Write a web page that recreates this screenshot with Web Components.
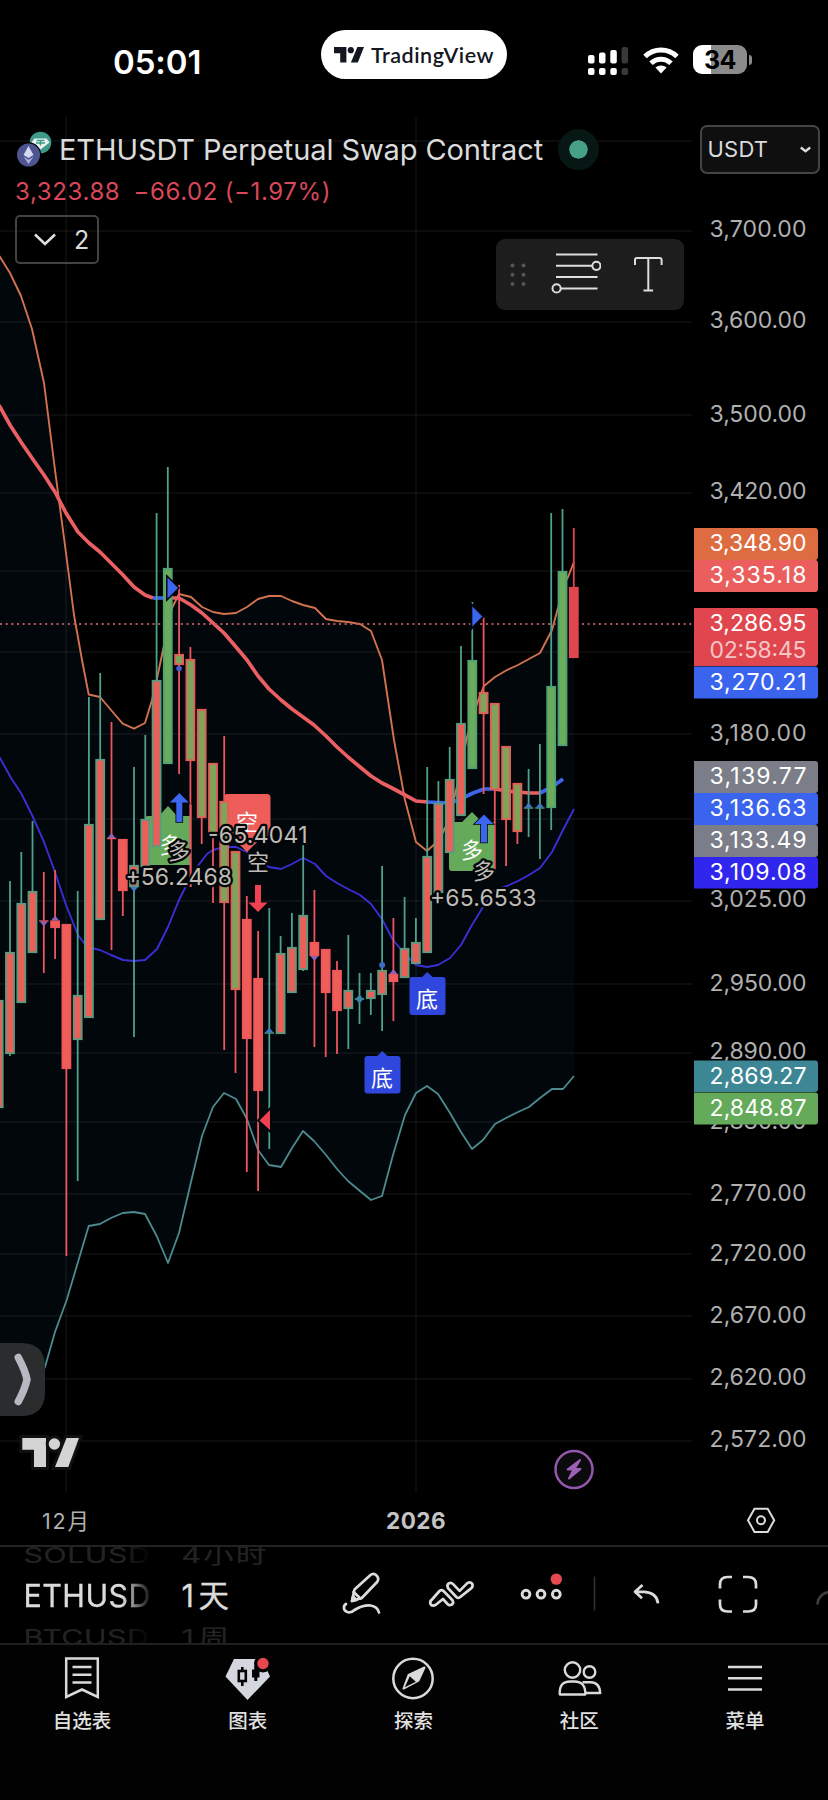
<!DOCTYPE html>
<html lang="zh">
<head>
<meta charset="utf-8">
<title>ETHUSDT</title>
<style>
  body {
    margin: 0;
    background: #000;
    color: #dbdbdb;
    font-family: Inter, "Noto Sans CJK SC", sans-serif;
  }
</style>
</head>
<body>
<trading-app></trading-app>

<script>
class StatusBar extends HTMLElement {
  constructor() {
    super();
    this._shadowRoot = this.attachShadow({ mode: 'open' });
  }

  connectedCallback() {
    this._shadowRoot.innerHTML = `
      <style>
        :host { display: grid; grid-template-columns: 321px 186px 1fr; height: 110px; }
        .time { padding: 42px 0 0 113px; font-size: 33px; line-height: 40px; font-weight: 600; color: #fff; letter-spacing: -0.1px; }
        .pill { display: flex; align-items: center; box-sizing: border-box; height: 49px; margin-top: 30px; padding-left: 13px; border-radius: 25px; background: #fff; color: #131722; }
        .pill span { margin-left: 7px; font: 600 21.5px/28px Lato, sans-serif; letter-spacing: 0.5px; white-space: nowrap; }
        .right { display: flex; padding: 45px 0 0 81px; }
        .battery { display: flex; align-items: center; justify-content: center; width: 54px; height: 29px; margin-left: 14px; border-radius: 9px; background: linear-gradient(90deg, #fff 18px, #8b8b8b 18px); color: #000; font-size: 25px; font-weight: 700; letter-spacing: -0.5px; }
        .nub { width: 3px; height: 10px; margin: 10px 0 0 2px; border-radius: 0 3px 3px 0; background: #8b8b8b; }
      </style>
      <div class="time">05:01</div>
      <div class="pill">
        <svg width="30" height="16" viewBox="0 0 30 16" fill="#131722">
          <path d="M0 0h12.4v15.6H6.2V6.2H0z"/><circle cx="16.8" cy="3.2" r="3.1"/><path d="M23.4 0H30l-6.2 15.6h-6.9z"/>
        </svg>
        <span>TradingView</span>
      </div>
      <div class="right">
        <svg width="41" height="31" viewBox="0 0 41 31">
          <g fill="#fff">
            <rect x="0" y="10" width="6.5" height="8.6" rx="2"/><rect x="11" y="7.5" width="6.5" height="11.1" rx="2"/><rect x="22.3" y="5" width="6.5" height="13.6" rx="2"/>
            <rect x="0" y="23" width="6.5" height="7" rx="2"/><rect x="11" y="23" width="6.5" height="7" rx="2"/><rect x="22.3" y="23" width="6.5" height="7" rx="2"/>
          </g>
          <g fill="#393939"><rect x="33.6" y="2" width="6.5" height="16.6" rx="2"/><rect x="33.6" y="23" width="6.5" height="7" rx="2"/></g>
        </svg>
        <svg width="36" height="30" viewBox="0 0 36 30" style="margin-left:14px" fill="none" stroke="#fff" stroke-width="5">
          <path d="M2 11.5c9-8.7 23-8.7 32 0M8 18.3c5.6-5.4 14.4-5.4 20 0"/>
          <path d="M18 28.6l-5.6-6c3.2-2.8 8-2.8 11.2 0z" fill="#fff" stroke="none"/>
        </svg>
        <div class="battery">34</div><div class="nub"></div>
      </div>
    `;
  }
}
customElements.define('status-bar', StatusBar);

// Bars are 11.275px apart. Each row: high, body top, body bottom, low, kind, marker.
// kind: u = rising, d = falling, g = rising strong, f = falling pullback, n = live bar
const BARS = [
  [1000, 1000, 1108, 1108, 'u'],
  [881, 952, 1054, 1056, 'u'],
  [852, 903, 1003, 1003, 'u'],
  [821, 891, 953, 953, 'u'],
  [872, 920.5, 921.5, 973, 'd', 'dn'],
  [870, 920.5, 928, 959, 'd', 'up'],
  [924, 924, 1069, 1256, 'd'],
  [891, 995, 1040, 1181, 'u'],
  [697, 824, 1018, 1018, 'u'],
  [673, 759, 920, 920, 'u'],
  [722, 838, 839, 950, 'd', 'up'],
  [839, 839, 891, 916, 'd'],
  [767, 865, 887, 1037, 'u', 'dn'],
  [735, 819, 867, 867, 'u'],
  [513, 680, 847, 847, 'u'],
  [467, 568, 764, 764, 'g'],
  [585, 654, 665, 774, 'f', 'di'],
  [647, 659, 761, 887, 'f'],
  [709, 709, 818, 844, 'f'],
  [763, 763, 836, 903, 'f'],
  [736, 801, 903, 1050, 'f'],
  [851, 851, 990, 1073, 'f'],
  [896, 919, 1039, 1172, 'd'],
  [931, 978, 1091, 1191, 'd'],
  [908, 1032.5, 1033.5, 1149, 'u', 'up'],
  [936, 953, 1034, 1034, 'u'],
  [913, 947, 993, 993, 'u'],
  [845, 915, 970, 971, 'u'],
  [890, 942, 956, 1047, 'd', 'dn'],
  [949, 949, 993, 1057, 'd'],
  [961, 970, 1011, 1054, 'd'],
  [935, 990, 1009, 1049, 'u'],
  [973, 998.5, 999.5, 1024, 'u', 'mid'],
  [973, 990, 999, 1015, 'u'],
  [866, 970, 995, 1031, 'u', 'top'],
  [918, 974, 982, 1021, 'd', 'up'],
  [897, 948, 978, 978, 'u'],
  [918, 942, 964, 964, 'u'],
  [767, 856, 953, 953, 'u'],
  [781, 803, 893, 893, 'u'],
  [747, 779, 853, 853, 'u'],
  [646, 723, 816, 816, 'u'],
  [602, 660, 769, 769, 'g'],
  [616, 692, 714, 794, 'f'],
  [703, 703, 790, 870, 'f'],
  [746, 746, 820, 866, 'f'],
  [783, 783, 832, 844, 'f'],
  [769, 807.5, 808.5, 837, 'u', 'up'],
  [744, 807.5, 808.5, 859, 'u', 'up'],
  [513, 686, 808, 830, 'g'],
  [509, 571, 746, 746, 'g'],
  [528, 587, 658, 658, 'n']
];

const KINDS = {
  u: ['#5a9b7f', '#eb5f59', '#4fa08c'],
  d: ['#ef5659', '#ef5d58', '#ef5560'],
  g: ['#4fa274', '#6aab5c', '#4fa08c'],
  f: ['#e45c55', '#80a35c', '#ef5560'],
  n: ['#e0464d', '#e0464d', '#e0464d']
};

const UPPER = '-3,252 0,257 10,273 21,296 32,329 44,383 55,470 66,553 74,615 82,660 88.7,694.5 100,697 111,710 122.7,723.7 134,728.7 145,723 152,700 156.7,680 163,650 172,608 179,594 191,597 202,607 213,612 224,614 236,613 247,607 258,599 269,596 281,596 292,601 303,605 315,608 326,619 337,621 348,622 360,624 371,631 382,660 394,740 405,800 416,842 427,851 439,840 449,820 458,782 467,737 473,716 479,698 484,686 495,677 507,670 518,665 529,659 540,653 552,630 558,608 563,586 568,577 574,562';
const LOWER = '-3,1408 22,1402 33,1390 45,1367 55,1332 66.7,1300 77.7,1263 88.7,1226 100,1224 111,1218 122.7,1213 134,1212 145,1214 156.7,1236 168,1263 179,1233 191,1182 202,1136 213,1107 224,1093 236,1099 247,1119 258,1150 269,1165 281,1167 292,1148 303,1131 314,1141 326,1155 337,1169 348,1181 360,1191 371,1200 382,1196 393,1155 405,1115 416,1093 427,1086 438,1094 450,1113 461,1132 472,1149 483,1140 495,1124 506,1118 518,1112 529,1107 540,1098 552,1089 563,1089 574,1076';
const MIDDLE = '-2,755 0,758 11,778 21,793 32,815 44,842 55,872 66,905 78,935 87,947 100,950 111,955 123,960 134,961 145,960 157,949 168,927 179,900 188,882 197,867 207,854 213,850 224,847 236,847 247,852 258,861 269,867 281,869 292,864 303,858 315,864 326,876 337,883 348,889 360,895 371,904 382,919 393,940 405,954 416,965 427,967 438,965 450,958 461,945 472,925 483,907 495,890 507,886 518,881 529,875 540,868 552,852 563,830 574,809';
const TREND = [
  ['#ea5f62', '-2,404 0,407 10,425 21,442 32,458 44,475 55,492 66,513 78,532 89,543 100,552 111,563 123,575 134,587 145,595 153,598'],
  ['#3f66ea', '153,598 168,598'],
  ['#ea5f62', '168,598 179,598 191,605 202,613 213,623 224,633 236,647 247,660 258,676 269,689 281,700 292,709 303,717 314,725 326,736 337,747 348,757 360,767 371,776 382,783 392,788 405,795 416,801 427,802'],
  ['#3f66ea', '427,802 450,803 461,799 473,793 484,789 495,789'],
  ['#ea5f62', '495,789 507,791 518,792 529,793 540,793'],
  ['#3f66ea', '540,793 552,787 563,779']
];

const PRICES = [
  ['3,700.00', 229], ['3,600.00', 320], ['3,500.00', 413.5], ['3,420.00', 491],
  ['3,180.00', 733], ['3,025.00', 899], ['2,950.00', 983], ['2,890.00', 1051],
  ['2,830.00', 1121], ['2,770.00', 1192.5], ['2,720.00', 1253], ['2,670.00', 1315],
  ['2,620.00', 1377], ['2,572.00', 1439]
];

const TAGS = [
  ['3,348.90', 528, 32, '#dd6c41'], ['3,335.18', 560, 32, '#ea5f5d'],
  ['3,286.95', 608, 58, '#e0464d'], ['3,270.21', 666.5, 32, '#3a64ee'],
  ['3,139.77', 761, 32, '#7b7d88'], ['3,136.63', 793, 32, '#3a64ee'],
  ['3,133.49', 825, 32, '#7b7d88'], ['3,109.08', 857, 31.5, '#3026ee'],
  ['2,869.27', 1060.5, 31.5, '#3d8795'], ['2,848.87', 1092.5, 32, '#65a95a']
];

class PriceChart extends HTMLElement {
  constructor() {
    super();
    this._shadowRoot = this.attachShadow({ mode: 'open' });
  }

  connectedCallback() {
    this.render();
  }

  grid() {
    const rows = [141, 231, 322, 415, 493, 571, 652, 734, 819, 901, 984, 1053, 1122, 1194, 1254, 1316, 1379, 1441];
    return rows.map(y => `<path d="M0 ${y}H692"/>`).join('') + '<path d="M66 117V1492M416 117V1492"/>';
  }

  marker(type, x, top, bottom, kind) {
    const color = kind === 'd' ? '#9060b5' : '#3f78c0';
    const up = y => `<path d="M${x} ${y - 4}l4 5h-8z" fill="${color}"/>`;
    switch (type) {
      case 'up': return up(top - 1);
      case 'dn': return `<path d="M${x} ${bottom + 5}l4-5h-8z" fill="${color}"/>`;
      case 'di': return `<circle cx="${x}" cy="668.5" r="2.8" fill="#4a5cd0"/>`;
      case 'mid': return `<path d="M${x} ${top - 4}l4 4.5l-4 4.5l-4-4.5z" fill="#3d84a4"/>`;
      case 'top': return `<circle cx="${x}" cy="965" r="3" fill="#3b6cc0"/>`;
    }
    return '';
  }

  bars() {
    return BARS.map(([high, top, bottom, low, kind, mark], n) => {
      const x = +(10 + 11.275 * (n - 1)).toFixed(1);
      const [edge, fill, wick] = KINDS[kind];
      let out = '';
      if (high < top) out += `<path d="M${x} ${high}V${top}" stroke="${wick}" stroke-width="1.8"/>`;
      if (low > bottom) out += `<path d="M${x} ${bottom}V${low}" stroke="${wick}" stroke-width="1.8"/>`;
      if (bottom - top > 2) {
        out += `<rect x="${x - 4}" y="${top + 0.8}" width="8" height="${bottom - top - 1.6}" fill="${fill}" stroke="${edge}" stroke-width="1.8"/>`;
      } else {
        out += `<path d="M${x - 4.7} ${top + 0.5}h9.4" stroke="${wick}" stroke-width="1.4"/>`;
      }
      return out + this.marker(mark, x, top, bottom, kind);
    }).join('');
  }

  render() {
    const arrowUp = (x, y, h) => `<path d="M${x} ${y}l9.5 9.5h-6.5V${y + h}h-6V${y + 9.5}h-6.5z" fill="#3c66ef" stroke="#02060b" stroke-width="1.6" paint-order="stroke"/>`;
    this._shadowRoot.innerHTML = `
      <style>
        :host { display: block; height: 1435px; }
        svg { display: block; }
        .axis { font-size: 23px; fill: #b0b0b0; }
        .tag { font-size: 23px; fill: #fff; }
        .cn { font-size: 22px; text-anchor: middle; fill: #fff; }
        .note { fill: #bfbcb8; stroke: #030507; stroke-width: 4.5px; stroke-linejoin: round; paint-order: stroke; }
        .num { font-size: 23px; }
      </style>
      <svg width="828" height="1435" viewBox="0 110 828 1435">
        <path d="M${UPPER} ${LOWER.split(' ').reverse().join(' ')}z" fill="#02070c"/>
        <g stroke="#aaa" stroke-opacity="0.07" stroke-width="2">${this.grid()}</g>
        <g fill="none" stroke-linejoin="round">
          <polyline points="${UPPER}" stroke="#d2724f" stroke-width="1.9"/>
          <polyline points="${LOWER}" stroke="#4c8b8f" stroke-width="1.8"/>
          <polyline points="${MIDDLE}" stroke="#3a2fd6" stroke-width="1.9"/>
          ${TREND.map(([color, points]) => `<polyline points="${points}" stroke="${color}" stroke-width="3.7"/>`).join('')}
        </g>
        <path d="M0 624H692" stroke="#b5575f" stroke-width="2" stroke-dasharray="2 3.65"/>

        <path d="M148 816h11l9-10 9 10h13.5V865H148q-3 0-3-3V819q0-3 3-3z" fill="#65aa5b"/>
        <path d="M452 822h10l10-10 10 10h13V871H452q-3 0-3-3V825q0-3 3-3z" fill="#65aa5b"/>
        <path d="M227 794h40q3.5 0 3.5 3.5V840H259l-12 12-12-12H224V797q0-3 3-3z" fill="#ee5d59"/>
        ${this.bars()}
        <path d="M190.7 805V887" stroke="#ef5560" stroke-width="1.8"/>
        <text class="cn" x="170.5" y="853">多</text>
        <text class="cn" x="472" y="858">多</text>
        <text class="cn" x="247" y="830">空</text>

        <g fill="#2f47dc">
          <rect x="409.5" y="977" width="36" height="38" rx="3"/><path d="M421 978l6.300-6 6.300 6z"/>
          <rect x="364.5" y="1056" width="36" height="37.5" rx="3"/><path d="M376 1057l6.300-6 6.300 6z"/>
        </g>
        <text class="cn" x="427" y="1007">底</text>
        <text class="cn" x="382" y="1086">底</text>

        <text class="cn note" x="179" y="858.5">多</text>
        <text class="cn note" x="484" y="878.5">多</text>
        <text class="cn note" x="258" y="869.5">空</text>
        <text class="note num" x="125.5" y="885" textLength="106.5">+56.2468</text>
        <text class="note num" x="208" y="843" textLength="99.5">-65.4041</text>
        <text class="note num" x="430" y="905.5" textLength="106.5">+65.6533</text>

        ${arrowUp(179.3, 793, 29)}
        ${arrowUp(484, 814.5, 28)}
        <path d="M258 912l9.5-9.5h-6.5V885h-6v17.5h-6.5z" fill="#f04152"/>
        <path d="M167.5 577.5v21l10.5-10.5z" fill="#3c66ef" stroke="#02060b" stroke-width="3" paint-order="stroke"/>
        <path d="M472.3 606.5v20l10-10z" fill="#3c66ef" stroke="#02060b" stroke-width="4" paint-order="stroke"/>
        <path d="M270 1110v20l-10.5-9.5z" fill="#f04152" stroke="#02060b" stroke-width="4" paint-order="stroke"/>

        ${PRICES.map(([text, y]) => `<text class="axis" x="709.5" y="${y + 8.3}" textLength="97">${text}</text>`).join('')}
        ${TAGS.map(([text, y, h, color]) => `
          <path d="M694 ${y}h121q3 0 3 3v${h - 6}q0 3-3 3H694z" fill="${color}"/>
          <text class="tag" x="709.5" y="${y + 23.3}" textLength="97">${text}</text>`).join('')}
        <text class="tag" x="709.5" y="657.5" textLength="97" fill-opacity="0.7">02:58:45</text>

        <circle cx="574" cy="1469.5" r="18.5" fill="#0b0a0c" stroke="#9457ae" stroke-width="2.5"/>
        <path d="M580 1460l-12.5 9.500h6l-4.500 9 11.500-9.500h-6z" fill="#9d60b5" stroke="#9d60b5" stroke-width="2" stroke-linejoin="round"/>

        <g fill="#d4d4d4" stroke="#101010" stroke-width="6" paint-order="stroke">
          <path d="M22.3 1438H46v29H34v-17.3H22.3z"/><circle cx="54.4" cy="1444" r="5.7"/><path d="M66.5 1438H79l-10.7 29H55z"/>
        </g>
        <path d="M0 1343H21Q45 1343 45 1367V1392Q45 1416 21 1416H0z" fill="#2b2c2e"/>
        <path d="M18.3 1357.5Q25 1370 27 1379.5Q25 1389 18.3 1401.5" fill="none" stroke="#b7b9c1" stroke-width="7.5" stroke-linecap="round"/>

        <text class="axis" x="42" y="1529" style="font-size:21.5px" textLength="47">12月</text>
        <text class="axis" x="386" y="1529" style="font-size:22.5px;font-weight:700;fill:#c4c4c4" textLength="59.5">2026</text>
        <g fill="none" stroke="#dcdcdc" stroke-width="2">
          <path d="M754.5 1508.7h13.2l6.5 11.6-6.5 11.6h-13.2l-6.5-11.6z"/><circle cx="761" cy="1520.3" r="4"/>
        </g>
      </svg>
    `;
  }
}
customElements.define('price-chart', PriceChart);

class SymbolLegend extends HTMLElement {
  constructor() {
    super();
    this._shadowRoot = this.attachShadow({ mode: 'open' });
  }

  connectedCallback() {
    this._shadowRoot.innerHTML = `
      <style>
        :host { display: block; }
        .title { display: flex; align-items: center; height: 44px; font-size: 29px; white-space: nowrap; }
        .title svg { margin: 0 7px 0 2px; }
        .name { width: 485px; letter-spacing: -0.1px; }
        .live { width: 19px; height: 19px; border: 11px solid #071713; border-radius: 50%; margin-left: 14px; background: #46a186; background-clip: padding-box; }
        .change { height: 32px; margin-top: 5px; font-size: 24px; line-height: 32px; letter-spacing: 0.62px; word-spacing: -0.8px; color: #d9475a; white-space: pre; }
        .count { display: flex; align-items: center; box-sizing: border-box; width: 84px; height: 49px; margin-top: 7px; padding-left: 17px; border: 2px solid #434343; border-radius: 5px; font-size: 25px; }
        .count span { margin-left: 18px; }
      </style>
      <div class="title">
        <svg width="35" height="36" viewBox="0 0 35 36">
          <circle cx="23.5" cy="11.5" r="10.8" fill="#3f9a8a"/>
          <path d="M17.5 7.5h12l3 4-9 7-9-7z" fill="#e8f3f1"/><path d="M19.5 9.5h8M23.5 9.5v5M19 12h9" stroke="#3f9a8a" stroke-width="1.5"/>
          <circle cx="11.5" cy="24" r="11.5" fill="#4d5490" stroke="#000" stroke-width="2.5" paint-order="stroke"/>
          <path d="M11.5 15l5 9-5 3-5-3z" fill="#d5d9f2"/><path d="M6.5 25.7l5 3 5-3-5 7.3z" fill="#a9b0dc"/>
        </svg>
        <span class="name">ETHUSDT Perpetual Swap Contract</span>
        <i class="live"></i>
      </div>
      <div class="change">3,323.88  −66.02 (−1.97%)</div>
      <div class="count">
        <svg width="22" height="13" viewBox="0 0 22 13" fill="none" stroke="#e0e0e0" stroke-width="2.6"><path d="M1 1.500l10 9.500 10-9.500"/></svg>
        <span>2</span>
      </div>
    `;
  }
}
customElements.define('symbol-legend', SymbolLegend);

class CurrencySelect extends HTMLElement {
  constructor() {
    super();
    this._shadowRoot = this.attachShadow({ mode: 'open' });
  }

  connectedCallback() {
    this._shadowRoot.innerHTML = `
      <style>
        :host { display: flex; align-items: center; justify-content: space-between; box-sizing: border-box; width: 120px; height: 49px; padding: 0 7px 1px 5.5px; border: 2px solid #444; border-radius: 7px; background: #0f0f0f; font-size: 22px; letter-spacing: 0.2px; }
        svg { margin-top: 2px; }
      </style>
      <slot></slot>
      <svg width="11" height="7" viewBox="0 0 11 7" fill="none" stroke="#dbdbdb" stroke-width="2.4"><path d="M.8 1.500l4.700 3.700 4.700-3.700"/></svg>
    `;
  }
}
customElements.define('currency-select', CurrencySelect);

class DrawingTools extends HTMLElement {
  constructor() {
    super();
    this._shadowRoot = this.attachShadow({ mode: 'open' });
  }

  connectedCallback() {
    this._shadowRoot.innerHTML = `
      <style>
        :host { display: flex; align-items: center; box-sizing: border-box; width: 188px; height: 71px; padding-left: 14px; border-radius: 9px; background: #1d1d1d; }
      </style>
      <svg width="16" height="26" viewBox="0 0 16 26" fill="#555">
        <circle cx="2.5" cy="3.5" r="2"/><circle cx="13.5" cy="3.5" r="2"/><circle cx="2.5" cy="12.8" r="2"/><circle cx="13.5" cy="12.8" r="2"/><circle cx="2.5" cy="22" r="2"/><circle cx="13.5" cy="22" r="2"/>
      </svg>
      <svg width="50" height="42" viewBox="0 0 50 42" style="margin:-3px 0 0 25px" fill="none" stroke="#dedede" stroke-width="2">
        <path d="M5 2.5h41.5M5 13.8h36M5 25.1h41.5M10 36.4h36.5"/><circle cx="45.4" cy="13.8" r="4.1"/><circle cx="5.6" cy="36.4" r="4.1"/>
      </svg>
      <svg width="30" height="36" viewBox="0 0 30 36" style="margin:-2px 0 0 32px" fill="none" stroke="#dedede" stroke-width="2">
        <path d="M2 9V4q0-2 2-2h22.6q2 0 2 2v5M15.3 2v32.5M10.5 34.5h9.6"/>
      </svg>
    `;
  }
}
customElements.define('drawing-tools', DrawingTools);

class WheelPicker extends HTMLElement {
  constructor() {
    super();
    this._shadowRoot = this.attachShadow({ mode: 'open' });
  }

  connectedCallback() {
    this._shadowRoot.innerHTML = `
      <style>
        :host { display: flex; flex-direction: column; justify-content: center; height: 97px; overflow: hidden; font-size: 30.5px; white-space: nowrap; }
        div { flex: none; height: 41px; line-height: 41px; transform-origin: left center; }
        .ghost { color: #232323; transform: scaleY(0.72); }
        :host([fade]) div { -webkit-mask-image: linear-gradient(90deg, #000 98px, transparent 129px); mask-image: linear-gradient(90deg, #000 98px, transparent 129px); }
      </style>
      <div class="ghost"><slot name="before"></slot></div>
      <div><slot></slot></div>
      <div class="ghost"><slot name="after"></slot></div>
    `;
  }
}
customElements.define('wheel-picker', WheelPicker);

class ChartToolbar extends HTMLElement {
  constructor() {
    super();
    this._shadowRoot = this.attachShadow({ mode: 'open' });
  }

  connectedCallback() {
    this._shadowRoot.innerHTML = `
      <style>
        :host { display: flex; align-items: center; box-sizing: border-box; height: 100px; border-top: 2px solid #232323; border-bottom: 2px solid #202020; overflow: hidden; }
        wheel-picker { width: 158px; margin-left: 23.5px; letter-spacing: 0.4px; -webkit-text-stroke: 0.3px; }
        wheel-picker + wheel-picker { width: 160.5px; margin: 0; letter-spacing: 2px; }
        .day { letter-spacing: 4.5px; }
        svg { flex: none; }
      </style>
      <wheel-picker fade><span slot="before">SOLUSD</span>ETHUSD<span slot="after">BTCUSD</span></wheel-picker>
      <wheel-picker><span slot="before">4小时</span><span class="day">1天</span><span slot="after" class="day">1周</span></wheel-picker>
      <svg width="486" height="96" viewBox="342 1547.5 486 96" fill="none" stroke="#dcdcdc" stroke-width="2.7" stroke-linejoin="round" stroke-linecap="round">
        <path d="M352 1601.5l2.500-11.500 16-14.500q3-2.500 6 .5t.8 6.200l-15.500 16.300z"/>
        <path d="M353.5 1592.5l7 6.500"/><path d="M352 1601.5l1-4.500 3.500 3.500z" fill="#dcdcdc"/>
        <path d="M346 1604.5q-2.500 1.500-2 4.500t5 4q3 0 5.500-2.500q8-5 16-4.500q7 1 8.500 7"/>
        <path d="M439.5 1591.5q2-1.600 4 0l9 9.300q1.600 3-1 4.500-2.300 1-4-.8l-4.500-5-7.500 6q-3.500 1.600-5-1-1-3 1.500-4.500z"/>
        <path d="M459.6 1598q-1.500 1-3-.3l-8.500-9q-1.700-3 .7-4.800 2.500-1.300 4.300.7l6.500 6.800 8-8q2.700-1.400 4.500.7 1.300 2.400-.7 4.500z"/>
        <g stroke-width="2.9"><circle cx="526" cy="1594.7" r="3.9"/><circle cx="541" cy="1594.7" r="3.9"/><circle cx="556.3" cy="1594.7" r="3.9"/></g>
        <circle cx="556.3" cy="1579.6" r="5.7" fill="#e5484f" stroke="none"/>
        <path d="M594.5 1577v34" stroke="#333" stroke-width="1.5" stroke-linecap="butt"/>
        <path d="M642.5 1585.5l-7.500 6.800 7 6.500M635.5 1592.3h9q12.500 1 13.500 11.500" stroke-linecap="butt"/>
        <path d="M720 1589v-4q0-7.500 7.500-7.500h4.500M743 1577.5h5q8 0 8 7.500v4M756 1600v5q0 7-8 7h-5M732 1612h-4.500q-7.500 0-7.500-7v-5" stroke-linecap="butt"/>
        <path d="M817.5 1604q1-9 10.500-11.500" stroke="#3c3c3c"/>
      </svg>
    `;
  }
}
customElements.define('chart-toolbar', ChartToolbar);

class NavItem extends HTMLElement {
  constructor() {
    super();
    this._shadowRoot = this.attachShadow({ mode: 'open' });
  }

  connectedCallback() {
    this._shadowRoot.innerHTML = `
      <style>
        :host { display: flex; flex: 1; flex-direction: column; align-items: center; padding-top: 10.5px; font-size: 19.5px; line-height: 28px; font-weight: 500; color: #e0e0e0; }
        ::slotted(svg) { display: block; margin-bottom: 7.5px; }
      </style>
      <slot name="icon"></slot>
      <slot></slot>
    `;
  }
}
customElements.define('nav-item', NavItem);

class BottomNav extends HTMLElement {
  constructor() {
    super();
    this._shadowRoot = this.attachShadow({ mode: 'open' });
  }

  connectedCallback() {
    this._shadowRoot.innerHTML = `
      <style>
        :host { display: flex; box-sizing: border-box; height: 155px; margin-left: -1px; background: #020202; }
      </style>
      <nav-item>
        <svg slot="icon" width="46" height="44" viewBox="0 0 46 44" fill="none" stroke="#dadada" stroke-width="2.5">
          <path d="M7.2 2.5h31.6v38.5L23 33.5 7.2 41zM13.5 11h19M13.5 18.8h19M13.5 26.5h19"/>
        </svg>自选表
      </nav-item>
      <nav-item>
        <svg slot="icon" width="46" height="44" viewBox="0 0 46 44">
          <path d="M9 3h28l8 17.500L22.5 44 .5 20.500z" fill="#d5d7de"/>
          <g fill="none" stroke="#050505" stroke-width="2.6"><path d="M17.3 11v4M17.3 25v5"/><rect x="13.8" y="15" width="7" height="10"/></g>
          <path d="M27 13.5h7.500v8H27zM29.3 10h3v15h-3z" fill="#050505"/>
          <circle cx="38" cy="7.5" r="9" fill="#020202"/><circle cx="38" cy="7.5" r="5.7" fill="#e5484f"/>
        </svg>图表
      </nav-item>
      <nav-item>
        <svg slot="icon" width="46" height="44" viewBox="0 0 46 44">
          <circle cx="23" cy="22.5" r="19.7" fill="none" stroke="#dadada" stroke-width="2.5"/>
          <path d="M34.5 11.5l-6 13L13.5 32.5 18.5 19z" fill="#dadada" stroke="#dadada" stroke-width="2" stroke-linejoin="round"/>
          <path d="M14.8 31.3l5-11 6 5.500z" fill="#020202"/>
        </svg>探索
      </nav-item>
      <nav-item>
        <svg slot="icon" width="46" height="44" viewBox="0 0 46 44" fill="none" stroke="#dadada" stroke-width="2.4" stroke-linejoin="round">
          <circle cx="16.5" cy="14" r="7.7"/><circle cx="33.5" cy="16" r="5.8"/>
          <path d="M3.8 38.5q-1-13 10.5-13h4q11.5 0 11 13z"/><path d="M26.5 26.3h8q9 0 9.700 10.700h-14.500"/>
        </svg>社区
      </nav-item>
      <nav-item>
        <svg slot="icon" width="46" height="44" viewBox="0 0 46 44" fill="none" stroke="#dadada" stroke-width="2.5">
          <path d="M6 11h34M6 22.2h34M6 33.5h34"/>
        </svg>菜单
      </nav-item>
    `;
  }
}
customElements.define('bottom-nav', BottomNav);

class TradingApp extends HTMLElement {
  constructor() {
    super();
    this._shadowRoot = this.attachShadow({ mode: 'open' });
  }

  connectedCallback() {
    this._shadowRoot.innerHTML = `
      <style>
        :host { display: block; width: 828px; height: 1800px; overflow: hidden; background: #000; }
        .pane { position: relative; }
        symbol-legend { position: absolute; left: 15px; top: 17px; }
        currency-select { position: absolute; right: 8px; top: 14.5px; }
        drawing-tools { position: absolute; left: 496px; top: 129px; }
      </style>
      <status-bar></status-bar>
      <div class="pane">
        <price-chart></price-chart>
        <symbol-legend></symbol-legend>
        <currency-select>USDT</currency-select>
        <drawing-tools></drawing-tools>
      </div>
      <chart-toolbar></chart-toolbar>
      <bottom-nav></bottom-nav>
    `;
  }
}
customElements.define('trading-app', TradingApp);
</script>
</body>
</html>
